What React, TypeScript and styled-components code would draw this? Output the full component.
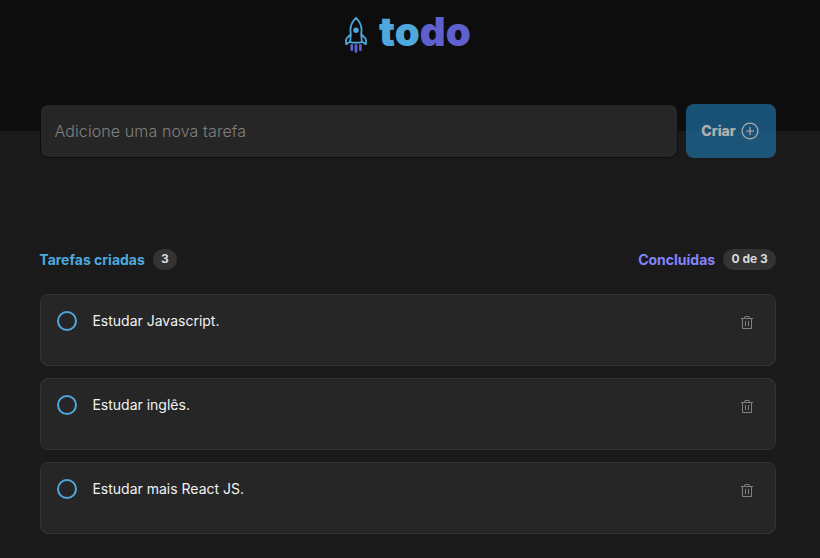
import { useState } from 'react';
import styled, { createGlobalStyle } from 'styled-components';

const GlobalStyle = createGlobalStyle`
  * { box-sizing: border-box; margin: 0; padding: 0; }
  body {
    background: #1a1a1a;
    color: #f2f2f2;
    font-family: Inter, "Liberation Sans", sans-serif;
    overflow: hidden;
  }
  button, input { font-family: inherit; }
`;

const Page = styled.div`
  width: 816px;
  padding: 0 40px;
`;

const Backdrop = styled.div`
  height: 558px;
  background: linear-gradient(#0d0d0d 131px, #1a1a1a 131px);
`;

const Header = styled.header`
  display: flex;
  justify-content: center;
  height: 104px;
  padding: 16px 2px 0 0;
  gap: 11px;
`;

const RocketIcon = styled.svg`
  width: 24px;
  height: 38px;
  flex: none;
`;

const LogoText = styled.h1`
  width: 91px;
  font-size: 40px;
  line-height: 32px;
  font-weight: 900;
  letter-spacing: 0.1px;
  white-space: nowrap;
  color: #4ea8de;
  span { color: #5e60ce; }
`;

const Form = styled.form`
  display: flex;
  gap: 8px;
  height: 54px;
`;

const TaskInput = styled.input`
  flex: 1;
  min-width: 0;
  padding: 0 13.5px;
  border: 1px solid #0d0d0d;
  border-radius: 8px;
  background: #262626;
  color: #f2f2f2;
  font-size: 16px;
  outline: none;
  &::placeholder { color: #808080; opacity: 1; font-weight: 300; letter-spacing: 0.1px; }
`;

const CreateButton = styled.button`
  display: flex;
  align-items: center;
  justify-content: center;
  gap: 5px;
  width: 90px;
  padding: 0 2px 1px 0;
  border: 0;
  border-radius: 8px;
  background: #1e6f9f;
  color: #f2f2f2;
  font-size: 14px;
  font-weight: 800;
  opacity: 0.7;
`;

const Summary = styled.div`
  display: flex;
  justify-content: space-between;
  margin: 91px 0 0 -0.7px;
  height: 21px;
`;

const Counter = styled.div<{ $color: string }>`
  display: flex;
  align-items: center;
  gap: 8px;
  color: ${({ $color }) => $color};
  font-size: 14px;
  font-weight: 700;
`;

const Badge = styled.span`
  height: 21px;
  padding: 0 8.3px;
  border-radius: 11px;
  background: #333;
  color: #d9d9d9;
  font-size: 12px;
  line-height: 20px;
`;

const TaskList = styled.ul`
  display: grid;
  gap: 12px;
  margin-top: 24px;
  list-style: none;
`;

const Task = styled.li`
  display: flex;
  align-items: flex-start;
  height: 72px;
  padding: 16px 21px 0 16px;
  border: 1px solid #333;
  border-radius: 8px;
  background: #262626;
`;

const Check = styled.button<{ $done: boolean }>`
  flex: none;
  width: 20px;
  height: 20px;
  border: 2px solid #4ea8de;
  border-radius: 50%;
  background: ${({ $done }) => ($done ? '#4ea8de' : 'transparent')};
`;

const TaskText = styled.p`
  flex: 1;
  margin-left: 15.4px;
  font-size: 14px;
  line-height: 20px;
`;

const DeleteButton = styled.button`
  display: flex;
  margin-top: 4px;
  border: 0;
  background: none;
  color: #808080;
`;

function Rocket() {
  return (
    <RocketIcon viewBox="0 0 24 38" fill="none">
      <path
        d="M12 1.8C8.3 5.2 6.4 9.5 6.4 14.5L6.8 18.2 2.4 22.6C1.7 24.5 1.8 26.5 2.2 28.3L6.2 25.5 8 26.6H16L17.8 25.5 21.8 28.3C22.2 26.5 22.3 24.5 21.6 22.6L17.2 18.2 17.6 14.5C17.6 9.5 15.7 5.2 12 1.8ZM6.8 18.2 6.2 25.5M17.2 18.2 17.8 25.5"
        stroke="#4ea8de"
        strokeWidth="1.8"
        strokeLinejoin="round"
      />
      <circle cx="12" cy="14.2" r="2.7" fill="#4ea8de" />
      <path d="M7.8 29.4v4.4M12 29.4v6.2M16.4 29.4v4.4" stroke="#5e60ce" strokeWidth="2.8" strokeLinecap="round" />
    </RocketIcon>
  );
}

function PlusCircle() {
  return (
    <svg width="18" height="18" viewBox="0 0 18 18" fill="none" stroke="currentColor" strokeWidth="1.2">
      <circle cx="9" cy="9" r="7.9" />
      <path d="M9 5v8M5 9h8" />
    </svg>
  );
}

function Trash() {
  return (
    <svg width="14" height="14" viewBox="0 0 14 14" fill="none" stroke="currentColor">
      <path d="M1 3.5h12M2.5 3.5v10h9v-10M4.5 3V2.1L5 1.5h4l.5.6V3M5.5 6v5M8.5 6v5" />
    </svg>
  );
}

const initialTasks = [
  { title: 'Estudar Javascript.', done: false },
  { title: 'Estudar inglês.', done: false },
  { title: 'Estudar mais React JS.', done: false },
];

export default function App() {
  const [tasks, setTasks] = useState(initialTasks);
  const [title, setTitle] = useState('');
  const toggle = (index: number) =>
    setTasks(tasks.map((task, i) => (i === index ? { ...task, done: !task.done } : task)));

  return (
    <Backdrop>
      <GlobalStyle />
      <Page>
        <Header>
          <Rocket />
          <LogoText>to<span>do</span></LogoText>
        </Header>
        <Form
          onSubmit={(event) => {
            event.preventDefault();
            if (title) setTasks([...tasks, { title, done: false }]);
            setTitle('');
          }}
        >
          <TaskInput
            placeholder="Adicione uma nova tarefa"
            value={title}
            onChange={(event) => setTitle(event.target.value)}
          />
          <CreateButton>Criar <PlusCircle /></CreateButton>
        </Form>
        <Summary>
          <Counter $color="#4ea8de">Tarefas criadas <Badge>{tasks.length}</Badge></Counter>
          <Counter $color="#8284fa">
            Concluídas <Badge>{`${tasks.filter((task) => task.done).length} de ${tasks.length}`}</Badge>
          </Counter>
        </Summary>
        <TaskList>
          {tasks.map((task, index) => (
            <Task key={index}>
              <Check type="button" $done={task.done} onClick={() => toggle(index)} />
              <TaskText>{task.title}</TaskText>
              <DeleteButton onClick={() => setTasks(tasks.filter((_, i) => i !== index))}>
                <Trash />
              </DeleteButton>
            </Task>
          ))}
        </TaskList>
      </Page>
    </Backdrop>
  );
}
